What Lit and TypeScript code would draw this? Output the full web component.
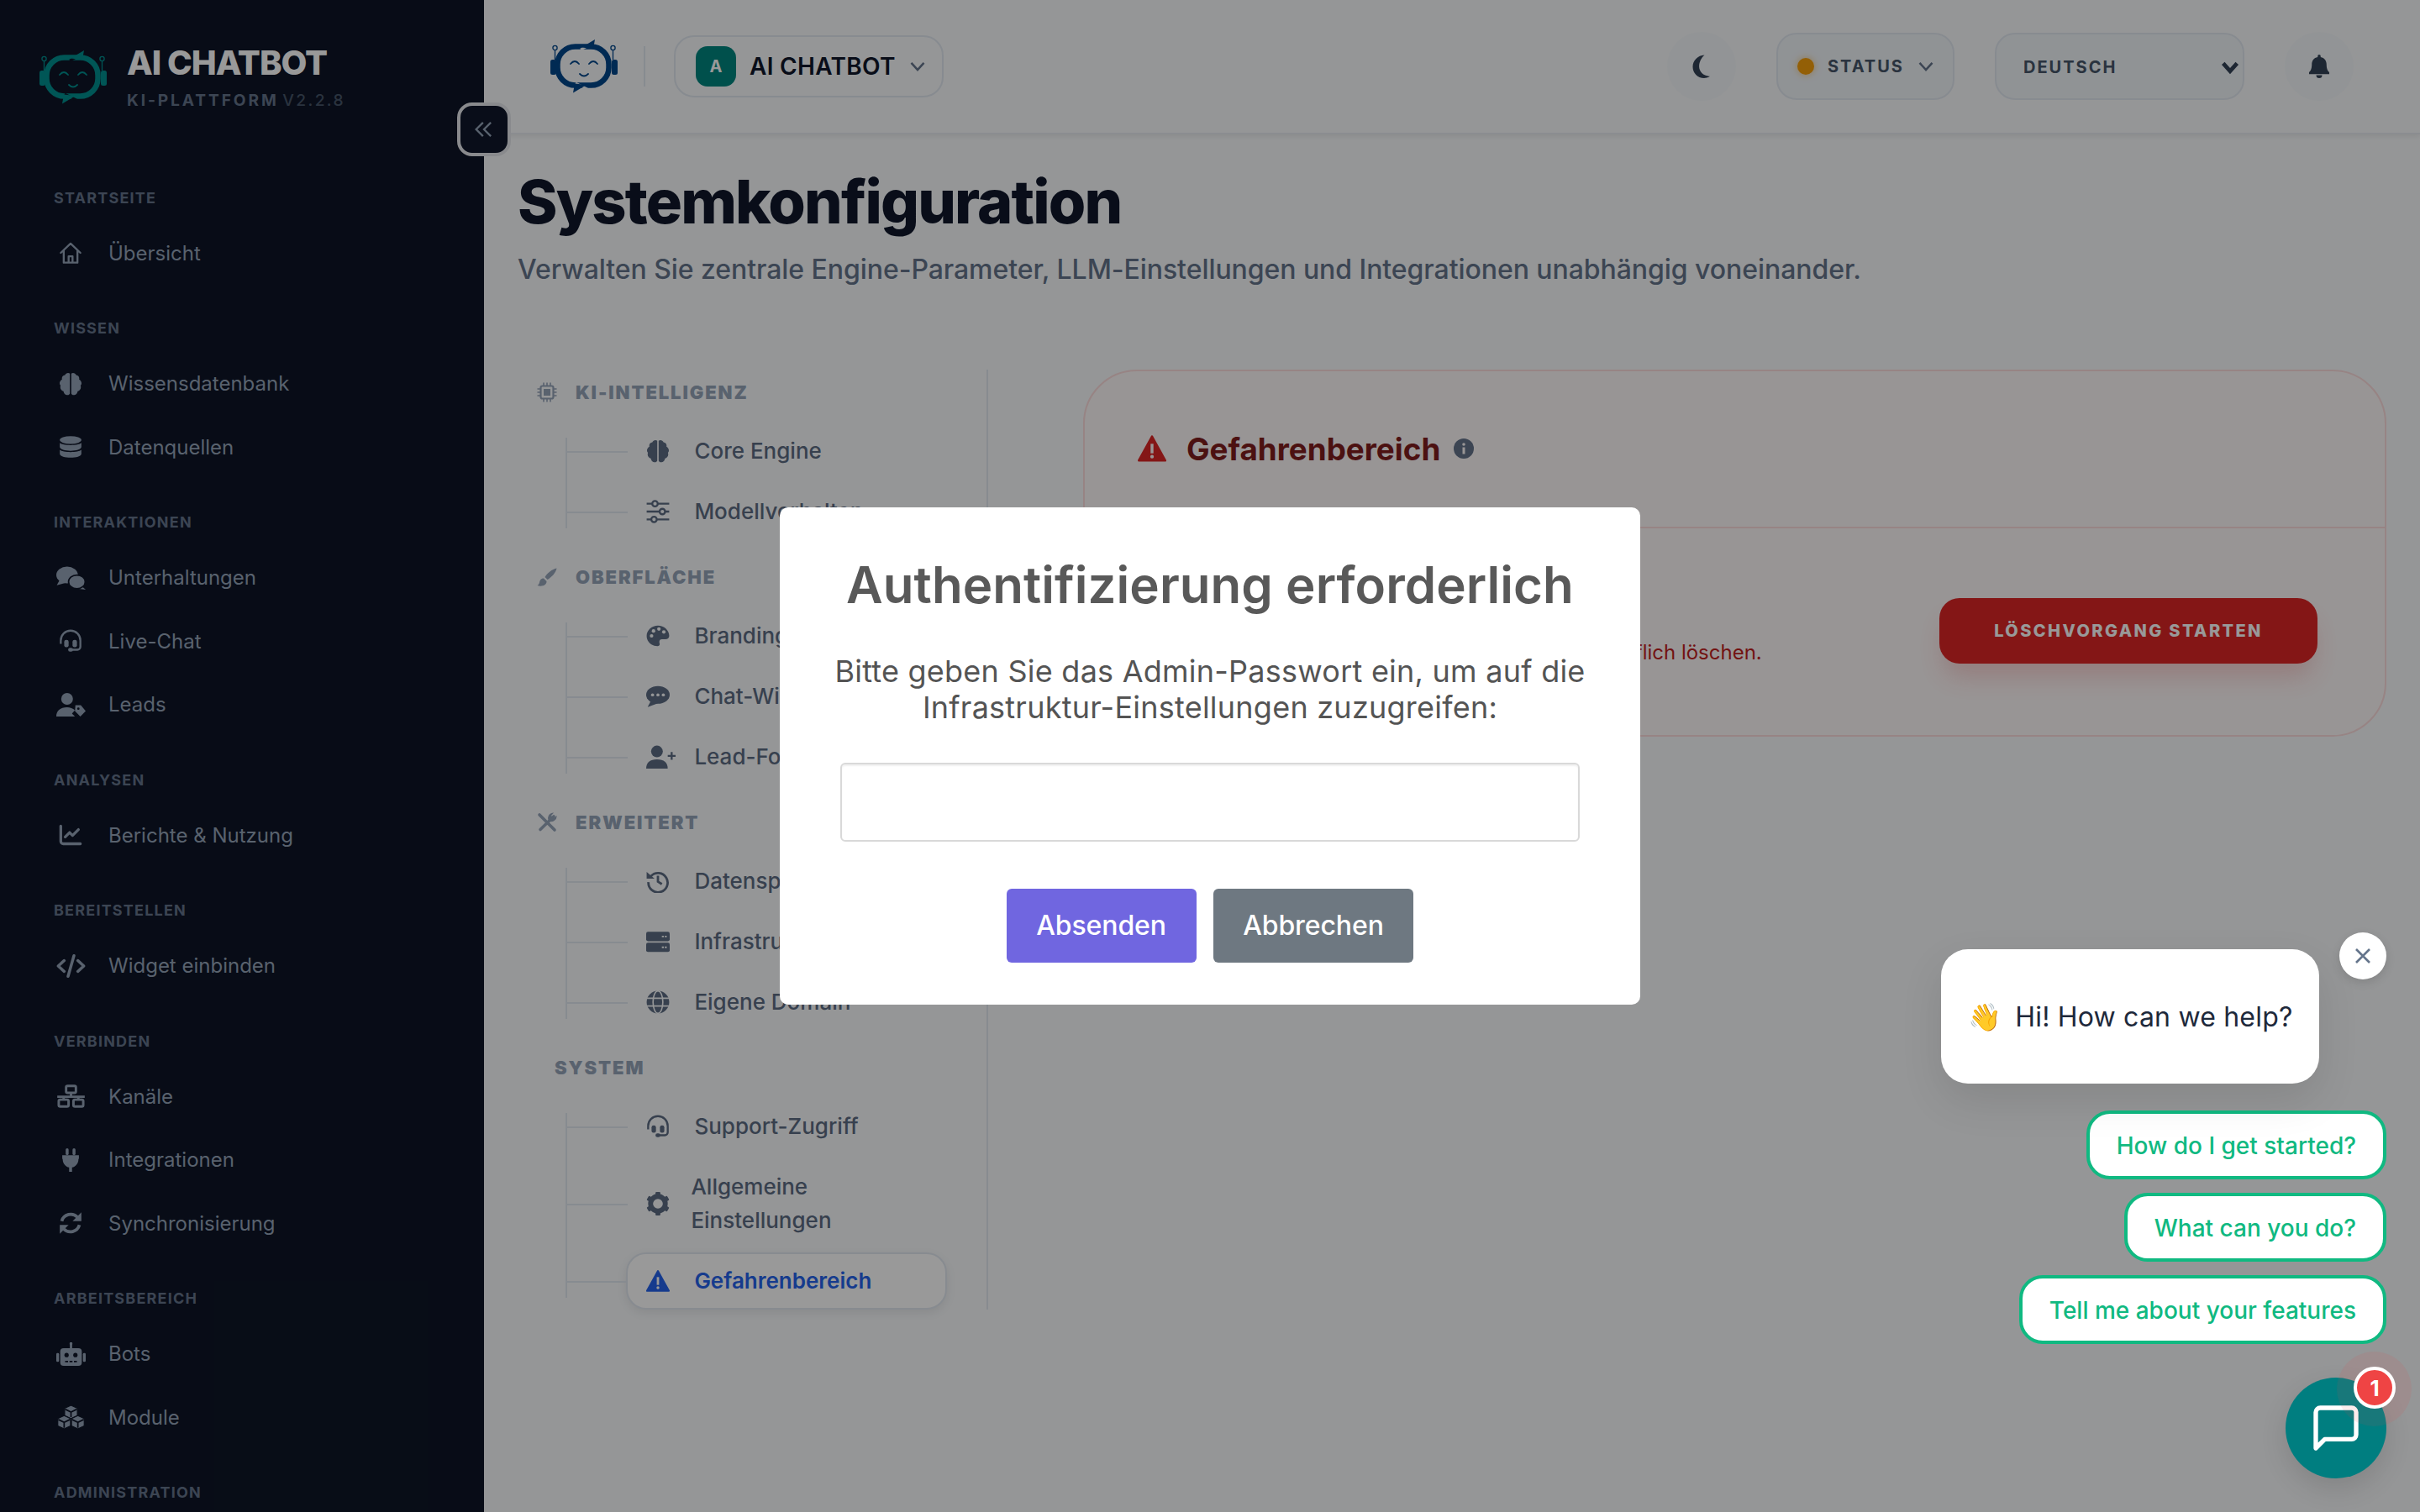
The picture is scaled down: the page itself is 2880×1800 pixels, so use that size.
import { LitElement, html, css, svg } from "lit";
import { customElement } from "lit/decorators.js";

const I: Record<string, any> = {
  home: svg`<path d="M2 12 L12 2.5 L22 12 M5 9.5 V22 H19 V9.5 M10 22 V15.5 H14 V22" fill="none" stroke="currentColor" stroke-width="2" stroke-linejoin="round" stroke-linecap="round"/>`,
  brain: svg`<path d="M11.300 1.500 C9.800 .200 7 .900 6.300 3 C4 3.200 2.700 5.200 3.300 7.400 C1 8.500 -.100 12 1.800 13.800 C.800 16.400 2.500 19 4.800 19.400 C5 22 7.500 24 9.800 23.300 C10.700 23 11.300 22.400 11.300 21.700Z"/><path d="M12.700 1.500 C14.200 .200 17 .900 17.700 3 C20 3.200 21.300 5.200 20.700 7.400 C23 8.500 24.100 12 22.200 13.800 C23.200 16.400 21.500 19 19.200 19.400 C19 22 16.500 24 14.200 23.300 C13.300 23 12.700 22.400 12.700 21.700Z"/>`,
  db: svg`<ellipse cx="12" cy="5" rx="11" ry="4"/><path d="M1 8 C4 11 20 11 23 8 V12 C23 14.500 17.500 16 12 16 S1 14.500 1 12Z"/><path d="M1 15 C4 18 20 18 23 15 V19 C23 21.500 17.500 23 12 23 S1 21.500 1 19Z"/>`,
  comments: svg`<ellipse cx="11" cy="9" rx="11" ry="8.500"/><path d="M4 13 L0.500 19.500 L10 17Z"/><path d="M26 20.500 L30 24 L21 23Z"/><ellipse cx="21" cy="16" rx="8.500" ry="7" stroke="var(--ibg)" stroke-width="1.500"/>`,
  headset: svg`<path d="M2 15 V11.500 a10 10 0 0 1 20 0 V18 a3 3 0 0 1 -3 3 H13" fill="none" stroke="currentColor" stroke-width="2"/><rect x="5.500" y="11" width="4.500" height="7.500" rx="2"/><rect x="14" y="11" width="4.500" height="7.500" rx="2"/><rect x="9.500" y="19" width="5" height="4" rx="2"/>`,
  userTag: svg`<circle cx="11" cy="6" r="6"/><path d="M0 24 C0 18 4 14.500 11 14.500 C14 14.500 17 15.500 19 17.500 L16 21 L19 24Z"/><path d="M19.500 12.500 H25 L30 18.500 L24.500 24 L19 18.500Z"/><circle cx="22.500" cy="16" r="1.200" fill="var(--ibg)"/>`,
  chart: svg`<path d="M2 3 V18.500 a2.500 2.500 0 0 0 2.500 2.500 H22" fill="none" stroke="currentColor" stroke-width="2.800" stroke-linecap="round"/><path d="M6.500 14 L11 9.500 L14 12.500 L20 6.500" fill="none" stroke="currentColor" stroke-width="2.800" stroke-linecap="round" stroke-linejoin="round"/>`,
  code: svg`<path d="M8 6.500 L2 12 L8 17.500 M22 6.500 L28 12 L22 17.500 M18 1.500 L12 22.500" fill="none" stroke="currentColor" stroke-width="3" stroke-linecap="round" stroke-linejoin="round"/>`,
  network: svg`<g fill="none" stroke="currentColor" stroke-width="2.500"><rect x="10" y="1.500" width="10" height="7" rx="1.500"/><path d="M1 12.500 H29 M15 9 V12 M7.500 12.500 V15.500 M22.500 12.500 V15.500"/><rect x="2.500" y="15.500" width="10" height="7" rx="1.500"/><rect x="17.500" y="15.500" width="10" height="7" rx="1.500"/></g>`,
  plug: svg`<rect x="7" y="0" width="3" height="7" rx="1.500"/><rect x="14" y="0" width="3" height="7" rx="1.500"/><path d="M3.500 7 H20.500 V10 C20.500 10.800 20 11 20 11.500 C20 15.500 17 18.800 13.500 19.500 V24 H10.500 V19.500 C7 18.800 4 15.500 4 11.500 C4 11 3.500 10.800 3.500 10Z"/>`,
  sync: svg`<path d="M3 10 A9.500 9.500 0 0 1 19 6 M21 14 A9.500 9.500 0 0 1 5 18" fill="none" stroke="currentColor" stroke-width="3.200"/><path d="M23 1 V10 H14Z M1 23 V14 H10Z"/>`,
  robot: svg`<rect x="4" y="6" width="22" height="18" rx="3.500"/><rect x="13.800" y="0" width="2.400" height="7"/><circle cx="15" cy="1.500" r="1.500"/><rect x="0" y="11" width="2.800" height="9" rx="1.200"/><rect x="27.200" y="11" width="2.800" height="9" rx="1.200"/><circle cx="10.500" cy="13" r="2.200" fill="var(--ibg)"/><circle cx="19.500" cy="13" r="2.200" fill="var(--ibg)"/><path d="M9 19.500 H21" stroke="var(--ibg)" stroke-width="1.500" stroke-dasharray="3 1.500"/>`,
  cubes: svg`<g stroke="var(--ibg)" stroke-width="1"><path d="M15 0 L21.500 3 V10.500 L15 13.500 L8.500 10.500 V3Z"/><path d="M8 10.500 L14.500 13.500 V21 L8 24 L1.500 21 V13.500Z"/><path d="M22 10.500 L28.500 13.500 V21 L22 24 L15.500 21 V13.500Z"/><path d="M9 4 L15 6.800 L21 4 M15 6.800 V12 M2 14.500 L8 17.300 L14 14.500 M8 17.300 V23 M16 14.500 L22 17.300 L28 14.500 M22 17.300 V23" fill="none" stroke-width="1.500"/></g>`,
  chip: svg`<rect x="4.500" y="4.500" width="15" height="15" rx="2" fill="none" stroke="currentColor" stroke-width="2.200"/><rect x="8" y="8" width="8" height="8"/><path d="M8 .500 V4 M12 .500 V4 M16 .500 V4 M8 20 V23.500 M12 20 V23.500 M16 20 V23.500 M.500 8 H4 M.500 12 H4 M.500 16 H4 M20 8 H23.500 M20 12 H23.500 M20 16 H23.500" stroke="currentColor" stroke-width="1.600"/>`,
  brush: svg`<path d="M23.500 1.500 C18 2.500 12 7.500 9.500 12 L12.500 15 C17 12.500 22.500 7 23.500 1.500Z"/><path d="M8 13.500 C4.500 13.500 3.500 16 3 18.500 C2.500 20.500 1.500 21.500 .500 22 C5 23.500 11.500 22.500 11.500 17Z"/>`,
  palette: svg`<path d="M12 1.500 C5.800 1.500 .500 6.200 .500 12 C.500 18 5.500 22.500 11.500 22.500 C13.500 22.500 14.200 21 13.600 19.200 C13 17.200 14 15.500 16 15.500 H19.500 C22 15.500 23.500 14 23.500 12 C23.500 6.200 18.200 1.500 12 1.500Z"/><g fill="var(--ibg)"><circle cx="5.500" cy="12" r="1.800"/><circle cx="7.500" cy="7" r="1.800"/><circle cx="13" cy="5" r="1.800"/><circle cx="18" cy="8" r="1.800"/></g>`,
  commentDots: svg`<ellipse cx="12" cy="10.500" rx="12" ry="9"/><path d="M5 16 L1.500 23 L12 19Z"/><g fill="var(--ibg)"><circle cx="6.500" cy="10.500" r="1.600"/><circle cx="12" cy="10.500" r="1.600"/><circle cx="17.500" cy="10.500" r="1.600"/></g>`,
  userPlus: svg`<circle cx="11" cy="6.500" r="6"/><path d="M0 24 C0 17.500 4 14.500 11 14.500 C18 14.500 22 17.500 22 24Z"/><path d="M26 7 V15 M22 11 H30" stroke="currentColor" stroke-width="2"/>`,
  tools: svg`<path d="M3 3 L21 21 M20 5 L4 20.500" stroke="currentColor" stroke-width="3.600" fill="none" stroke-linecap="round"/><path d="M23.500 4 A6.500 6.500 0 0 1 14 10.500 L13 7 A6.500 6.500 0 0 1 20 .500 L17 4 L20 7Z"/>`,
  history: svg`<path d="M4.800 7 A9.800 9.800 0 1 1 2.300 13" fill="none" stroke="currentColor" stroke-width="2.400"/><path d="M.500 2.500 L8.500 9.500 H.500Z"/><path d="M12 6.500 V12.500 L16 15" fill="none" stroke="currentColor" stroke-width="2.400"/>`,
  server: svg`<rect x="0" y="2" width="24" height="9.500" rx="1.800"/><rect x="0" y="13" width="24" height="9.500" rx="1.800"/><path d="M16 6.800 H21 M16 17.800 H21" stroke="var(--ibg)" stroke-width="1.600" stroke-dasharray="2 1"/>`,
  globe: svg`<circle cx="12" cy="12" r="11.500"/><g fill="none" stroke="var(--ibg)" stroke-width="1.400"><ellipse cx="12" cy="12" rx="5" ry="11.500"/><path d="M.500 8 H23.500 M.500 16 H23.500"/></g>`,
  gear: svg`<g><rect x="9.500" y="0" width="5" height="6" rx="1"/><rect x="9.500" y="0" width="5" height="6" rx="1" transform="rotate(60 12 12)"/><rect x="9.500" y="0" width="5" height="6" rx="1" transform="rotate(120 12 12)"/><rect x="9.500" y="0" width="5" height="6" rx="1" transform="rotate(180 12 12)"/><rect x="9.500" y="0" width="5" height="6" rx="1" transform="rotate(240 12 12)"/><rect x="9.500" y="0" width="5" height="6" rx="1" transform="rotate(300 12 12)"/></g><circle cx="12" cy="12" r="7.500" fill="none" stroke="currentColor" stroke-width="5"/>`,
  warn: svg`<path d="M12 2 L23 22 H1Z" stroke="currentColor" stroke-width="2" stroke-linejoin="round"/><rect x="10.800" y="8" width="2.400" height="8" fill="var(--ibg)"/><circle cx="12" cy="18.800" r="1.500" fill="var(--ibg)"/>`,
  sliders: svg`<path d="M.500 4 H23.500 M.500 12 H23.500 M.500 20 H23.500" stroke="currentColor" stroke-width="2"/><g fill="var(--ibg)" stroke="currentColor" stroke-width="2"><circle cx="9" cy="4" r="2.800"/><circle cx="16.500" cy="12" r="2.800"/><circle cx="8" cy="20" r="2.800"/></g>`,
  moon: svg`<path d="M15 .500 C8 1 3 6 3 12.500 C3 19 8 24 14.500 24 C17 24 19 23.200 20.500 22 C14 22 9.500 17.500 9.500 12 C9.500 7.500 12 3 15 .500Z"/>`,
  bell: svg`<path d="M12 0 a1.500 1.500 0 0 1 1.500 1.500 V2.600 C17.500 3.300 19.500 6.500 19.500 10 C19.500 15 21.200 17 22.300 18 V20 H1.700 V18 C2.800 17 4.500 15 4.500 10 C4.500 6.500 6.500 3.300 10.500 2.600 V1.500 A1.500 1.500 0 0 1 12 0Z"/><path d="M9 21 H15 A3 3 0 0 1 9 21Z"/>`,
  info: svg`<circle cx="12" cy="12" r="12"/><rect x="10.500" y="10.500" width="3" height="8" fill="var(--ibg)"/><circle cx="12" cy="7" r="1.800" fill="var(--ibg)"/>`,
};
const WIDE = new Set(["comments", "userTag", "code", "network", "robot", "cubes", "userPlus"]);
const icon = (n: string, cls = "") =>
  html`<svg class="ic ${WIDE.has(n) ? "wide" : ""} ${cls}" viewBox="${WIDE.has(n) ? "0 0 30 24" : "0 0 24 24"}" fill="currentColor">${I[n]}</svg>`;

const logo = () => html`<svg class="logo" viewBox="0 0 80 64" fill="none" stroke="currentColor">
  <rect x="8.500" y="8.500" width="61" height="46" rx="21" stroke-width="6.500"/>
  <path d="M36 12 L50 5 M30 52 L44 59" stroke="var(--lbg)" stroke-width="3"/>
  <path d="M53 0 L37 9.500 L51 11Z M27 63.500 L43 54 L29 52.500Z" fill="currentColor" stroke="none"/>
  <rect x="0" y="24" width="7" height="18" rx="2.500" fill="currentColor" stroke="none"/>
  <rect x="73" y="24" width="7" height="18" rx="2.500" fill="currentColor" stroke="none"/>
  <g stroke-width="1.300"><circle cx="5.500" cy="10" r="2.600"/><circle cx="74.500" cy="10" r="2.600"/><path d="M5.500 13 V24 M74.500 13 V24"/></g>
  <g stroke-width="1.800" stroke-linecap="round"><path d="M24 29 Q29 23 34 29 M46 29 Q51 23 56 29 M35 41 Q40 46 45 41"/></g>
</svg>`;

const side = [
  { l: "STARTSEITE", i: [["home", "Übersicht"]] },
  { l: "WISSEN", i: [["brain", "Wissensdatenbank"], ["db", "Datenquellen"]] },
  { l: "INTERAKTIONEN", i: [["comments", "Unterhaltungen"], ["headset", "Live-Chat"], ["userTag", "Leads"]] },
  { l: "ANALYSEN", i: [["chart", "Berichte & Nutzung"]] },
  { l: "BEREITSTELLEN", i: [["code", "Widget einbinden"]] },
  { l: "VERBINDEN", i: [["network", "Kanäle"], ["plug", "Integrationen"], ["sync", "Synchronisierung"]] },
  { l: "ARBEITSBEREICH", i: [["robot", "Bots"], ["cubes", "Module"]] },
  { l: "ADMINISTRATION", i: [] },
];
const sub = [
  { l: "KI-INTELLIGENZ", ic: "chip", i: [["brain", "Core Engine"], ["sliders", "Modellverhalten"]] },
  { l: "OBERFLÄCHE", ic: "brush", i: [["palette", "Branding"], ["commentDots", "Chat-Widget"], ["userPlus", "Lead-Formular"]] },
  { l: "ERWEITERT", ic: "tools", i: [["history", "Datenspeicher"], ["server", "Infrastruktur"], ["globe", "Eigene Domain"]] },
  { l: "SYSTEM", ic: "", i: [["headset", "Support-Zugriff"], ["gear", "Allgemeine Einstellungen"], ["warn", "Gefahrenbereich"]] },
];

@customElement("app-root")
export class AppRoot extends LitElement {
  static styles = css`
    :host { display: block; zoom: 2; width: 1440px; height: 900px; overflow: hidden; position: relative; font-family: Inter, "Liberation Sans", sans-serif; background: #f8fafc; color: #0f172a; }
    * { box-sizing: border-box; }
    .app { display: grid; grid-template-columns: 288px 1fr; height: 900px; }
    .ic { height: 14px; width: 14px; flex: none; }
    .ic.wide { width: 17.5px; }
    .logo { flex: none; }

    .sidebar { background: #0e1527; --ibg: #0e1527; --lbg: #0e1527; overflow: hidden; height: 900px; color: #94a3b8; }
    .brand { display: flex; gap: 12px; padding: 30px 0 0 23.5px; height: 110.300px; align-items: flex-start; }
    .brand .logo { width: 40px; height: 32px; color: #008f8f; }
    .brand h1 { margin: -4.300px 0 0; color: #fff; font-size: 20px; line-height: 24px; font-weight: 800; letter-spacing: -0.5px; }
    .brand p { margin: 3.700px 0 0; font-size: 9.6px; line-height: 12px; font-weight: 700; letter-spacing: 1.44px; color: #64748b; white-space: nowrap; }
    .brand p span { color: #475569; font-weight: 500; letter-spacing: 1.200px; margin-left: -1.500px; }
    .sec { margin-bottom: 18.6px; }
    .sec h2 { margin: 0 0 6.5px; padding-left: 32px; font-size: 9px; line-height: 15px; font-weight: 700; letter-spacing: 0.6px; color: #64748b; }
    .sitem { display: flex; align-items: center; gap: 12.5px; height: 37.7px; padding-left: 32px; font-size: 12px; }
    .sitem .ibox { width: 20px; display: flex; justify-content: center; flex: none; }

    .collapse { position: absolute; left: 272px; top: 61px; width: 32px; height: 32px; border-radius: 9px; border: 2px solid #e5e7eb; background: #0f172a; color: #94a3b8; display: flex; align-items: center; justify-content: center; z-index: 3; }
    .collapse svg { width: 14px; height: 14px; }

    .main { min-width: 0; }
    .topbar { height: 80px; background: #f8fafc; border-bottom: 1px solid #e8ebf0; box-shadow: 0 1px 3px rgba(0,0,0,.08); display: flex; align-items: center; padding: 0 39.5px 0 39px; --lbg: #f8fafc; }
    .topbar .logo { width: 41px; height: 32px; color: #00468a; }
    .vline { width: 1px; height: 24px; background: #e2e8f0; margin: 0 17px 0 15px; }
    .tenant { display: flex; align-items: center; width: 160.500px; height: 37px; border: 1px solid #e2e8f0; border-radius: 12px; padding: 0 12px; gap: 8px; font-size: 14px; font-weight: 600; letter-spacing: .15px; color: #0f172a; background: #f8fafc; white-space: nowrap; }
    .avatar { width: 24px; height: 24px; border-radius: 7px; background: #00857f; color: #fff; display: flex; align-items: center; justify-content: center; font-size: 10px; font-weight: 700; flex: none; }
    .chev { width: 10px; height: 10px; flex: none; color: #64748b; }
    .spacer { flex: 1; }
    .round { width: 41px; height: 41px; border-radius: 50%; background: #f4f7fa; color: #334155; display: flex; align-items: center; justify-content: center; }
    .status, .lang { height: 40px; border: 1px solid #e2e8f0; border-radius: 12px; background: #f1f5f9; display: flex; align-items: center; font-size: 10px; font-weight: 700; letter-spacing: 1px; color: #475569; margin-left: 24px; }
    .status { width: 106px; padding: 0 11.500px; gap: 8px; }
    .dot { width: 10px; height: 10px; border-radius: 50%; background: #f59e0b; box-shadow: 0 0 4px rgba(245,158,11,.5); flex: none; }
    .lang { width: 148.500px; padding: 1px 2px 0 16px; justify-content: space-between; margin-right: 24px; }
    .lang .chev { stroke-width: 2.600; color: #334155; width: 11px; height: 11px; }

    .content { padding: 20px 20px 0; }
    .title { margin: 0; font-size: 36px; line-height: 40px; font-weight: 800; letter-spacing: -0.92px; color: #0f172a; }
    .subtitle { margin: 8.300px 0 0; font-size: 16px; line-height: 24px; font-weight: 500; color: #64748b; letter-spacing: -.03px; }
    .cols { display: grid; grid-template-columns: 280px 1fr; column-gap: 56.5px; margin-top: 47.700px; align-items: start; }

    .subnav { border-right: 1px solid #e2e8f0; padding: 5.300px 25.500px 0 11.500px; height: 559.500px; --ibg: #f8fafc; }
    .group + .group { margin-top: 14px; }
    .ghead { display: flex; align-items: center; height: 16px; gap: 11px; font-size: 11px; font-weight: 900; letter-spacing: .95px; color: #94a3b8; }
    .ghead .ic { width: 12px; height: 12px; }
    .ghead.bare { padding-left: 10.500px; }
    .list { position: relative; margin: 10px 0 0 53.200px; display: flex; flex-direction: column; gap: 2px; }
    .list::before { content: ""; position: absolute; left: -36px; top: 9px; bottom: 7px; width: 1px; background: #e2e8f0; }
    .item { position: relative; display: flex; align-items: center; gap: 14.500px; padding: 6px 11px; line-height: 20px; font-size: 13px; font-weight: 500; color: #5d6c83; border: 1px solid transparent; border-radius: 12px; width: 190.800px; }
    .item .ic.wide { margin-right: -3.500px; }
    .item::before { content: ""; position: absolute; left: -36px; width: 36px; top: 50%; height: 1px; background: #e2e8f0; }
    .item.active { background: #fff; color: #2563eb; font-weight: 600; border-color: #e2e8f0; box-shadow: 0 2px 6px rgba(0,0,0,.08); --ibg: #fff; }
    .item.wrap { gap: 12.500px; }

    .card { height: 218.500px; border: 1px solid #fcdcdc; border-radius: 32px; background: #fef8f8; }
    .chead { height: 92.500px; display: flex; align-items: center; padding-left: 31.500px; gap: 12px; color: #7f1d1d; font-size: 18.400px; font-weight: 700; --ibg: #fef8f8; }
    .chead .warn { width: 17px; height: 17px; color: #dc2626; }
    .chead .inf { width: 12px; height: 12px; color: #64748b; margin-left: -4px; }
    .cbody { height: 123px; border-top: 1px solid #fcdcdc; display: flex; align-items: center; justify-content: space-between; padding: 0 40px 0 32px; }
    .desc { margin: 25.600px 0 0 13.800px; font-size: 12px; line-height: 20px; font-weight: 400; color: #c01f1f; }
    .danger { width: 225px; height: 39px; border-radius: 12px; background: #dc2626; color: #fff; font-size: 10px; font-weight: 800; letter-spacing: 1.200px; display: flex; align-items: center; justify-content: center; box-shadow: 0 10px 15px -3px rgba(220,38,38,.2); }

    .overlay { position: absolute; inset: 0; background: rgba(0,0,0,.4); z-index: 10; display: flex; align-items: center; justify-content: center; }
    .modal { width: 512px; height: 296px; background: #fff; border-radius: 5px; display: flex; flex-direction: column; align-items: center; text-align: center; }
    .modal h2 { margin: 0; padding: 26.800px 20px 0; font-size: 30px; line-height: 38px; font-weight: 600; color: #595959; letter-spacing: .03px; white-space: nowrap; }
    .modal p { margin: 0; padding: 22px 25px 0; font-size: 18px; line-height: 21.500px; color: #545454; letter-spacing: .12px; }
    .pw { width: 440px; height: 47px; margin-top: 22.100px; border: 1px solid #d9d9d9; border-radius: 3px; box-shadow: inset 0 1px 1px rgba(0,0,0,.06); flex: none; background: #fff; }
    .actions { display: flex; gap: 10px; margin-top: 28.300px; }
    .btn { height: 44px; padding: 0 17.800px; border-radius: 3px; color: #fff; font-size: 16px; line-height: 44px; font-weight: 500; letter-spacing: -.05px; }
    .ok { background: #7066e0; }
    .no { background: #6e7881; }

    .widget { position: absolute; right: 20px; bottom: 20px; z-index: 20; display: flex; flex-direction: column; align-items: flex-end; font-weight: 500; }
    .bubble { position: relative; width: 225px; height: 80px; margin-right: 40px; margin-bottom: 16px; background: #fff; border-radius: 16px; display: flex; align-items: center; padding-left: 16px; gap: 8px; font-size: 16px; font-weight: 400; color: #1e293b; box-shadow: 0 10px 25px rgba(0,0,0,.1); white-space: nowrap; letter-spacing: .1px; }
    .close { position: absolute; right: -40px; top: -10px; width: 28px; height: 28px; border-radius: 50%; background: #fff; color: #64748b; display: flex; align-items: center; justify-content: center; box-shadow: 0 2px 6px rgba(0,0,0,.12); }
    .close svg { width: 12px; height: 12px; }
    .chips { display: flex; flex-direction: column; align-items: flex-end; gap: 8px; margin-bottom: 20px; }
    .chip { height: 41px; border: 2px solid #10b981; border-radius: 14px; background: #fff; color: #10b981; padding: 1px 16px 0; display: flex; align-items: center; font-size: 14px; white-space: nowrap; }
    .fab { position: relative; width: 60px; height: 60px; border-radius: 50%; background: #007e80; display: flex; align-items: center; justify-content: center; color: #fff; box-shadow: 0 6px 16px rgba(0,0,0,.12); }
    .fab > svg { width: 32px; height: 32px; }
    .ping { position: absolute; left: 30.500px; top: -15.500px; width: 44.500px; height: 44.500px; border-radius: 50%; background: rgba(239,68,68,.1); }
    .badge { position: absolute; left: 40.500px; top: -6.500px; width: 25px; height: 25px; border-radius: 50%; background: #ef4444; border: 2px solid #fff; display: flex; align-items: center; justify-content: center; font-size: 13px; font-weight: 700; color: #fff; }
  `;

  render() {
    const chev = html`<svg class="chev" viewBox="0 0 12 12" fill="none" stroke="currentColor" stroke-width="1.500"><path d="M1.500 3.500 L6 8.500 L10.500 3.500"/></svg>`;
    return html`
      <div class="app">
        <aside class="sidebar">
          <div class="brand">${logo()}<div><h1>AI CHATBOT</h1><p>KI-PLATTFORM <span>V2.2.8</span></p></div></div>
          ${side.map((s) => html`<div class="sec"><h2>${s.l}</h2>${s.i.map((it) => html`<div class="sitem"><span class="ibox">${icon(it[0])}</span>${it[1]}</div>`)}</div>`)}
        </aside>
        <main class="main">
          <header class="topbar">
            ${logo()}<span class="vline"></span>
            <div class="tenant"><span class="avatar">A</span><span>AI CHATBOT</span>${chev}</div>
            <span class="spacer"></span>
            <div class="round">${icon("moon")}</div>
            <div class="status"><span class="dot"></span><span>STATUS</span>${chev}</div>
            <div class="lang"><span>DEUTSCH</span>${chev}</div>
            <div class="round">${icon("bell")}</div>
          </header>
          <div class="content">
            <h1 class="title">Systemkonfiguration</h1>
            <p class="subtitle">Verwalten Sie zentrale Engine-Parameter, LLM-Einstellungen und Integrationen unabhängig voneinander.</p>
            <div class="cols">
              <nav class="subnav">
                ${sub.map((g) => html`<div class="group">
                  <div class="ghead ${g.ic ? "" : "bare"}">${g.ic ? icon(g.ic) : ""}<span>${g.l}</span></div>
                  <div class="list">${g.i.map((it) => html`<div class="item ${it[0] === "warn" ? "active" : ""} ${it[0] === "gear" ? "wrap" : ""}">${icon(it[0])}<span>${it[1]}</span></div>`)}</div>
                </div>`)}
              </nav>
              <section class="card">
                <div class="chead">${icon("warn", "warn")}<span>Gefahrenbereich</span>${icon("info", "inf")}</div>
                <div class="cbody">
                  <p class="desc">Diesen Bot und alle zugehörigen Daten unwiderruflich löschen.</p>
                  <div class="danger">LÖSCHVORGANG STARTEN</div>
                </div>
              </section>
            </div>
          </div>
        </main>
      </div>
      <div class="collapse"><svg viewBox="0 0 24 24" fill="none" stroke="currentColor" stroke-width="2"><path d="M11 5 L4 12 L11 19 M19 5 L12 12 L19 19"/></svg></div>
      <div class="overlay">
        <div class="modal">
          <h2>Authentifizierung erforderlich</h2>
          <p>Bitte geben Sie das Admin-Passwort ein, um auf die Infrastruktur-Einstellungen zuzugreifen:</p>
          <div class="pw"></div>
          <div class="actions"><div class="btn ok">Absenden</div><div class="btn no">Abbrechen</div></div>
        </div>
      </div>
      <div class="widget">
        <div class="bubble"><span>👋</span><span>Hi! How can we help?</span>
          <div class="close"><svg viewBox="0 0 12 12" fill="none" stroke="currentColor" stroke-width="1.300"><path d="M2 2 L10 10 M10 2 L2 10"/></svg></div>
        </div>
        <div class="chips"><div class="chip">How do I get started?</div><div class="chip">What can you do?</div><div class="chip">Tell me about your features</div></div>
        <div class="fab">
          <svg viewBox="0 0 24 24" fill="none" stroke="currentColor" stroke-width="2" stroke-linejoin="round"><path d="M21 15 a2 2 0 0 1 -2 2 H7 l-4 4 V5 a2 2 0 0 1 2 -2 h14 a2 2 0 0 1 2 2z"/></svg>
          <span class="ping"></span><span class="badge">1</span>
        </div>
      </div>
    `;
  }
}
